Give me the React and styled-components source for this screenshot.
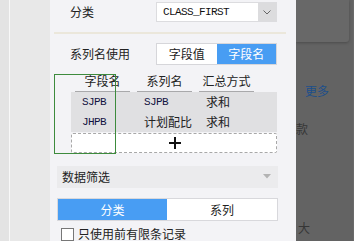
import React from "react";
import styled, { createGlobalStyle } from "styled-components";

const Global = createGlobalStyle`
  html, body {
    margin: 0;
    padding: 0;
    overflow: hidden;
  }
  body {
    font-family: "Noto Sans CJK SC", "Noto Sans", sans-serif;
    font-size: 12px;
    color: #222;
  }
`;

const BLUE = "#489df3";

const Screen = styled.div`
  display: flex;
  width: 354px;
  height: 241px;
  overflow: hidden;
`;

const Rail = styled.div`
  width: 9px;
  background: #e3e3e3;
  border-right: 1px solid #f8f8f8;
`;

const Side = styled.div`
  width: 40px;
  background: #e8e8e8;
`;

const Panel = styled.div`
  position: relative;
  width: 246px;
  flex-shrink: 0;
  background: #f3f3f6;
  display: flex;
  flex-direction: column;
  padding-top: 2px;
  box-sizing: border-box;
`;

const FieldRow = styled.div`
  display: flex;
  align-items: center;
  height: ${(p) => p.$h || 20}px;
  margin: ${(p) => p.$top || 0}px 0 0 20px;
  line-height: 1;
`;

const Label = styled.span`
  width: 86px;
  flex-shrink: 0;
`;

const Select = styled.div`
  display: flex;
  width: 121px;
  height: 20px;
  box-sizing: border-box;
  border: 1px solid #dcdcdf;
  background: #fff;
`;

const SelectText = styled.span`
  flex: 1;
  padding-left: 6px;
  font-family: "Liberation Mono", monospace;
  font-size: 11px;
  letter-spacing: -0.6px;
  line-height: 18px;
  color: #111;
`;

const SelectArrow = styled.span`
  width: 18px;
  background: #dcdcde;
  display: flex;
  align-items: center;
  justify-content: center;
`;

const Divider = styled.div`
  height: 2px;
  margin: 10px 10px 0 4px;
  background: #ebe7db;
`;

const Toggle = styled.div`
  display: flex;
  width: 121px;
  height: 22px;
  box-sizing: border-box;
  border: 1px solid #d6d6da;
  background: #fff;
`;

const ToggleItem = styled.span`
  flex: 1;
  display: flex;
  align-items: center;
  justify-content: center;
  background: ${(p) => (p.$active ? BLUE : "#fff")};
  color: ${(p) => (p.$active ? "#fff" : "#222")};
`;

const Table = styled.div`
  width: 206px;
  margin: 7px 0 0 21px;
`;

const Cols = styled.div`
  display: grid;
  grid-template-columns: repeat(3, 55px);
  column-gap: 7px;
  padding-left: 4px;
`;

const HeadCell = styled.span`
  text-align: center;
  height: 19px;
  line-height: 18px;
  border-bottom: 1px solid #a9a9ab;
`;

const Body = styled.div`
  background: #e0e0e2;
`;

const Cell = styled.span`
  height: 20px;
  line-height: 20px;
  padding-left: 7px;
  white-space: nowrap;
  font-family: ${(p) =>
    p.$mono ? '"Liberation Mono", monospace' : '"Noto Sans CJK SC", sans-serif'};
  font-size: ${(p) => (p.$mono ? 11 : 12)}px;
  letter-spacing: ${(p) => (p.$mono ? -0.6 : 0)}px;
  color: ${(p) => (p.$mono ? "#121240" : "#222")};
`;

const AddRow = styled.div`
  margin-top: 1px;
  height: 20px;
  box-sizing: border-box;
  border: 1px dashed #a8a8a8;
  border-radius: 2px;
  background: #fff;
  display: flex;
  align-items: center;
  justify-content: center;
  padding-left: 1px;
`;

const Marker = styled.div`
  position: absolute;
  left: 4px;
  top: 74px;
  width: 62px;
  height: 80px;
  box-sizing: border-box;
  border: 1px solid #3d8b3d;
  pointer-events: none;
`;

const FilterBar = styled.div`
  display: flex;
  align-items: center;
  justify-content: space-between;
  width: 221px;
  height: 24px;
  margin: 13px 0 0 7px;
  padding: 0 7px 0 5px;
  box-sizing: border-box;
  background: #ebebed;
`;

const Tabs = styled.div`
  display: flex;
  width: 221px;
  height: 25px;
  margin: 10px 0 0 7px;
  box-sizing: border-box;
  border: 1px solid #d8d8dc;
  background: #fff;
`;

const Tab = styled.span`
  width: ${(p) => p.$w}px;
  display: flex;
  align-items: center;
  justify-content: center;
  background: ${(p) => (p.$active ? BLUE : "#fff")};
  color: ${(p) => (p.$active ? "#fff" : "#222")};
`;

const CheckRow = styled.label`
  display: flex;
  align-items: center;
  gap: 4px;
  margin: 6px 0 0 11px;
  line-height: 14px;
`;

const Box = styled.span`
  width: 13px;
  height: 13px;
  box-sizing: border-box;
  border: 1px solid #777;
  background: #fff;
`;

const Backdrop = styled.div`
  flex: 1;
  display: flex;
  flex-direction: column;
  background: #636363;
  overflow: hidden;
  border-right: 1px solid #6a6a6a;
`;

const TopCard = styled.div`
  width: 53px;
  height: 42px;
  flex-shrink: 0;
  background: #686868;
  border-bottom-right-radius: 3px;
  box-shadow: 0 1px 3px rgba(0, 0, 0, 0.25);
`;

const Hint = styled.span`
  margin: ${(p) => p.$top}px 0 0 ${(p) => p.$left}px;
  font-size: 12px;
  line-height: 12px;
  white-space: nowrap;
  color: ${(p) => (p.$link ? "#1d4f8a" : "#363636")};
`;

const Chevron = () => (
  <svg width="8" height="5" viewBox="0 0 8 5">
    <path d="M0.5 0.5 L4 4 L7.5 0.5" fill="none" stroke="#666" strokeWidth="1" />
  </svg>
);

const Caret = () => (
  <svg width="8" height="5" viewBox="0 0 8 5">
    <path d="M0 0 H8 L4 4.5 Z" fill="#b3b3b3" />
  </svg>
);

const Plus = () => (
  <svg width="12" height="12" viewBox="0 0 12 12">
    <path d="M6 0 V12 M0 6 H12" stroke="#111" strokeWidth="2" />
  </svg>
);

const rows = [
  ["SJPB", "SJPB", "求和"],
  ["JHPB", "计划配比", "求和"],
];

export default function App() {
  return (
    <>
      <Global />
      <Screen>
        <Rail />
        <Side />
        <Panel>
          <FieldRow>
            <Label>分类</Label>
            <Select>
              <SelectText>CLASS_FIRST</SelectText>
              <SelectArrow>
                <Chevron />
              </SelectArrow>
            </Select>
          </FieldRow>
          <Divider />
          <FieldRow $h={22} $top={9}>
            <Label>系列名使用</Label>
            <Toggle>
              <ToggleItem>字段值</ToggleItem>
              <ToggleItem $active>字段名</ToggleItem>
            </Toggle>
          </FieldRow>
          <Table>
            <Cols>
              <HeadCell>字段名</HeadCell>
              <HeadCell>系列名</HeadCell>
              <HeadCell>汇总方式</HeadCell>
            </Cols>
            <Body>
              {rows.map((r, i) => (
                <Cols key={i}>
                  <Cell $mono>{r[0]}</Cell>
                  <Cell $mono={/^[A-Z]+$/.test(r[1])}>{r[1]}</Cell>
                  <Cell>{r[2]}</Cell>
                </Cols>
              ))}
            </Body>
            <AddRow>
              <Plus />
            </AddRow>
          </Table>
          <FilterBar>
            <span>数据筛选</span>
            <Caret />
          </FilterBar>
          <Tabs>
            <Tab $w={109} $active>
              分类
            </Tab>
            <Tab $w={110}>系列</Tab>
          </Tabs>
          <CheckRow>
            <Box />
            <span>只使用前有限条记录</span>
          </CheckRow>
          <Marker />
        </Panel>
        <Backdrop>
          <TopCard />
          <Hint $top={43} $left={9} $link>
            更多
          </Hint>
          <Hint $top={26} $left={0}>
            款
          </Hint>
          <Hint $top={87} $left={2}>
            大
          </Hint>
        </Backdrop>
      </Screen>
    </>
  );
}
